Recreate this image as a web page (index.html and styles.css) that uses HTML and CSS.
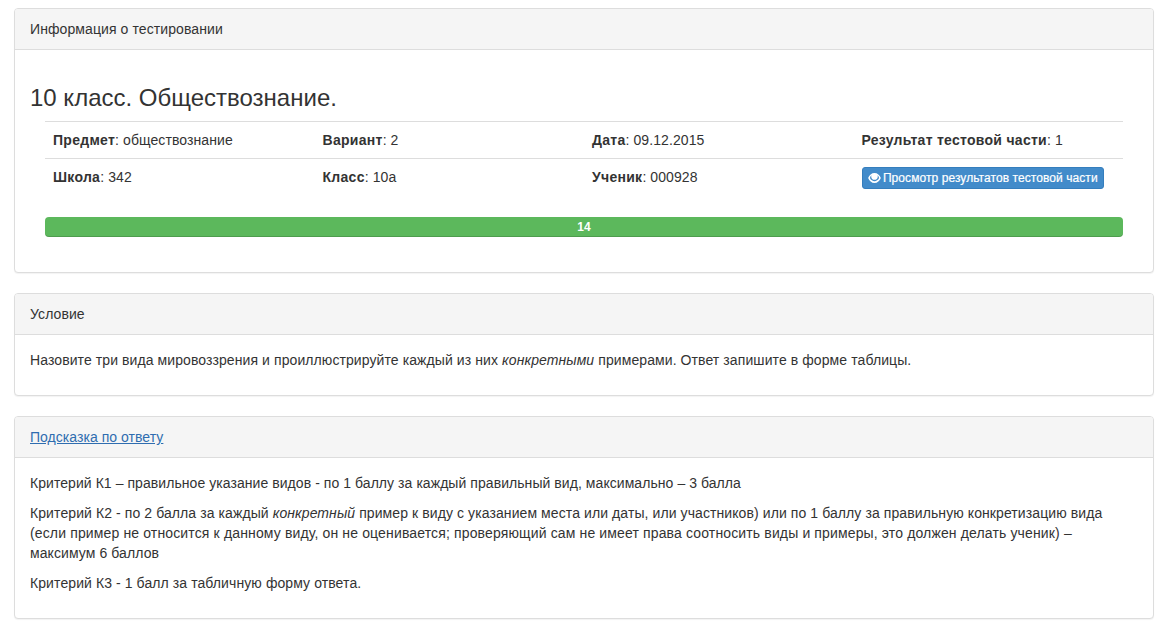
FILE: index.html
```html
<!DOCTYPE html>
<html lang="ru">
<head>
<meta charset="utf-8">
<title>Информация о тестировании</title>
<link rel="stylesheet" href="styles.css">
</head>
<body>
<main class="container">
  <section class="panel">
    <div class="panel-heading">Информация о тестировании</div>
    <div class="panel-body">
      <h3 class="title">10 класс. Обществознание.</h3>
      <div class="inset">
        <table class="info">
          <tr>
            <td><b>Предмет</b>: обществознание</td>
            <td><b>Вариант</b>: 2</td>
            <td><b>Дата</b>: 09.12.2015</td>
            <td><b>Результат тестовой части</b>: 1</td>
          </tr>
          <tr>
            <td><b>Школа</b>: 342</td>
            <td><b>Класс</b>: 10а</td>
            <td><b>Ученик</b>: 000928</td>
            <td><a class="btn" href="#"><svg class="eye" viewBox="0 0 14 11" width="13" height="10" aria-hidden="true"><path fill-rule="evenodd" d="M7 0C10.200 0 12.800 2.300 14 5.500C12.800 8.700 10.200 11 7 11C3.800 11 1.200 8.700 0 5.500C1.200 2.300 3.800 0 7 0ZM3.700 2.600C2.900 3.200 2.300 4.200 2 5.500C3.100 7.800 5 9 7 9C9 9 10.900 7.800 12 5.500C11.700 4.200 11.100 3.200 10.300 2.600C10.500 3.100 10.600 3.500 10.600 4C10.600 6 9 7.500 7 7.500C5 7.500 3.400 6 3.400 4C3.400 3.500 3.500 3.100 3.700 2.600Z"/></svg> Просмотр результатов тестовой части</a></td>
          </tr>
        </table>
        <div class="progress">14</div>
      </div>
    </div>
  </section>
  <section class="panel">
    <div class="panel-heading">Условие</div>
    <div class="panel-body">
      <p>Назовите три вида мировоззрения и проиллюстрируйте каждый из них <em>конкретными</em> примерами. Ответ запишите в форме таблицы.</p>
    </div>
  </section>
  <section class="panel">
    <div class="panel-heading"><a href="#">Подсказка по ответу</a></div>
    <div class="panel-body">
      <p class="tight">Критерий К1 – правильное указание видов - по 1 баллу за каждый правильный вид, максимально – 3 балла</p>
      <p>Критерий К2 - по 2 балла за каждый <em>конкретный</em> пример к виду с указанием места или даты, или участников) или по 1 баллу за правильную конкретизацию вида <span class="wide">(если пример не относится к данному виду, он не оценивается; проверяющий сам не имеет права соотносить виды и примеры, это должен делать ученик) –</span><br>максимум 6 баллов</p>
      <p>Критерий К3 - 1 балл за табличную форму ответа.</p>
    </div>
  </section>
</main>
</body>
</html>
```

FILE: styles.css
```css
* {
  box-sizing: border-box;
}

html,
body {
  margin: 0;
  background: #fff;
}

body {
  padding-top: 8px;
  font-family: "Liberation Sans", Arial, sans-serif;
  font-size: 14px;
  line-height: 20px;
  letter-spacing: 0.09px;
  color: #333;
}

.container {
  width: 1140px;
  margin-left: 14px;
}

.panel {
  margin-bottom: 20px;
  background: #fff;
  border: 1px solid #ddd;
  border-radius: 4px;
  box-shadow: 0 1px 1px rgba(0, 0, 0, 0.05);
}

.panel-heading {
  padding: 10px 15px;
  background: #f5f5f5;
  border-bottom: 1px solid #ddd;
  border-radius: 3px 3px 0 0;
}

.panel-heading a {
  color: #2f6db0;
  letter-spacing: 0.04px;
  text-decoration: underline;
}

.panel-body {
  padding: 15px;
}

.panel-body p {
  margin: 0 0 10px;
}

.panel-body .tight {
  letter-spacing: 0.06px;
}

.wide {
  letter-spacing: 0.14px;
}

.title {
  margin: 20px 0 10px;
  font-size: 24px;
  font-weight: 500;
  line-height: 26.4px;
  letter-spacing: 0;
}

.inset {
  padding: 0 15px;
}

.info {
  width: 100%;
  margin-bottom: 20px;
  border-collapse: collapse;
  border-spacing: 0;
  table-layout: fixed;
}

.info td {
  padding: 8px;
  border-top: 1px solid #ddd;
  vertical-align: top;
}

.info b {
  letter-spacing: 0.28px;
}

.btn {
  display: inline-block;
  padding: 1px 5px;
  font-size: 12px;
  font-weight: 400;
  line-height: 18px;
  letter-spacing: 0.07px;
  color: #fff;
  white-space: nowrap;
  text-decoration: none;
  background: #428bca;
  border: 1px solid #357ebd;
  border-radius: 3px;
  vertical-align: top;
  -webkit-text-stroke: 0.2px #fff;
}

.eye {
  fill: #fff;
  vertical-align: -1px;
  margin-right: -1px;
}

.progress {
  height: 20px;
  font-size: 12px;
  font-weight: 700;
  line-height: 20px;
  letter-spacing: 0;
  color: #fff;
  text-align: center;
  background: #5cb85c;
  border-radius: 4px;
  box-shadow: inset 0 -1px 0 rgba(0, 0, 0, 0.15);
  margin-bottom: 20px;
}
```
